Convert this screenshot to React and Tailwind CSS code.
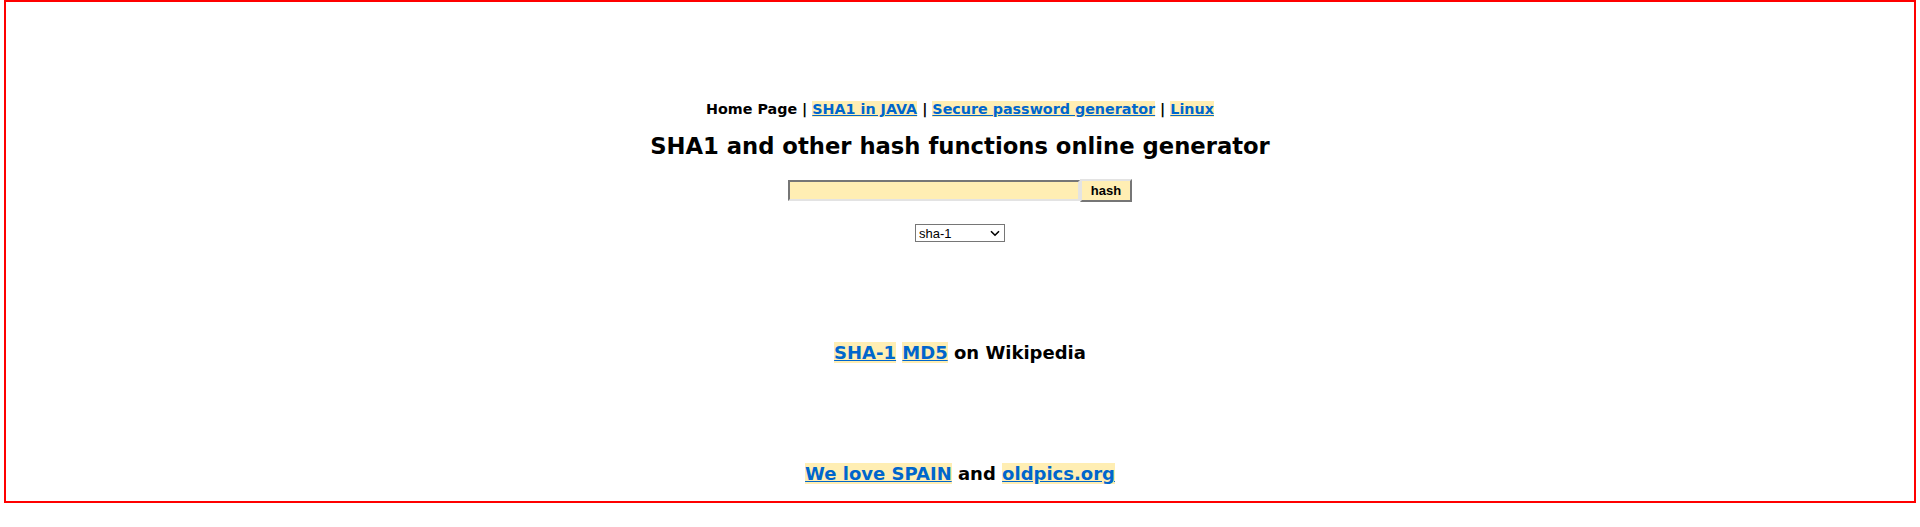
export default function App() {
  const link = "text-[#0066cc] underline bg-[#ffeeb3]";
  return (
    <div className="mx-[4px] h-[503px] border-2 border-[#ff0000] flex flex-col items-center font-['DejaVu_Sans',sans-serif] font-bold text-black">
      {/* nav */}
      <div className="mt-[97px] text-[14.3px]">
        Home Page | <a href="#" className={link}>SHA1 in JAVA</a> |{" "}
        <a href="#" className={link}>Secure password generator</a> |{" "}
        <a href="#" className={link}>Linux</a>
      </div>

      <h1 className="mt-[9px] text-[22.7px]">SHA1 and other hash functions online generator</h1>

      {/* form */}
      <div className="mt-[16px] flex items-center">
        <input
          type="text"
          className="w-[292px] h-[21px] bg-[#ffeeb3] border-2 border-t-[#767676] border-l-[#767676] border-b-[#e3e3e3] border-r-[#e3e3e3] outline-none"
        />
        <button className="h-[23px] px-[9px] bg-[#ffeeb3] border-2 border-t-[#e3e3e3] border-l-[#e3e3e3] border-b-[#767676] border-r-[#767676] font-['Liberation_Sans',sans-serif] font-bold text-[13px]">
          hash
        </button>
      </div>

      <div className="relative mt-[22px] w-[90px] h-[18px] flex">
        <select className="appearance-none w-full h-full border border-[#767676] bg-white pl-[3px] font-['Liberation_Sans',sans-serif] font-normal text-[13px] leading-none">
          <option>sha-1</option>
          <option>sha-256</option>
          <option>md5</option>
        </select>
        <svg
          className="absolute right-[5px] top-[6px] pointer-events-none"
          width="10"
          height="7"
          viewBox="0 0 10 7"
        >
          <path d="M1 1.2 L5 5.2 L9 1.2" fill="none" stroke="#000" strokeWidth="1.6" />
        </svg>
      </div>

      <div className="mt-[97px] text-[18px]">
        <a href="#" className={link}>SHA-1</a> <a href="#" className={link}>MD5</a> on Wikipedia
      </div>

      <div className="mt-[94px] text-[18px]">
        <a href="#" className={link}>We love SPAIN</a> and <a href="#" className={link}>oldpics.org</a>
      </div>
    </div>
  );
}
